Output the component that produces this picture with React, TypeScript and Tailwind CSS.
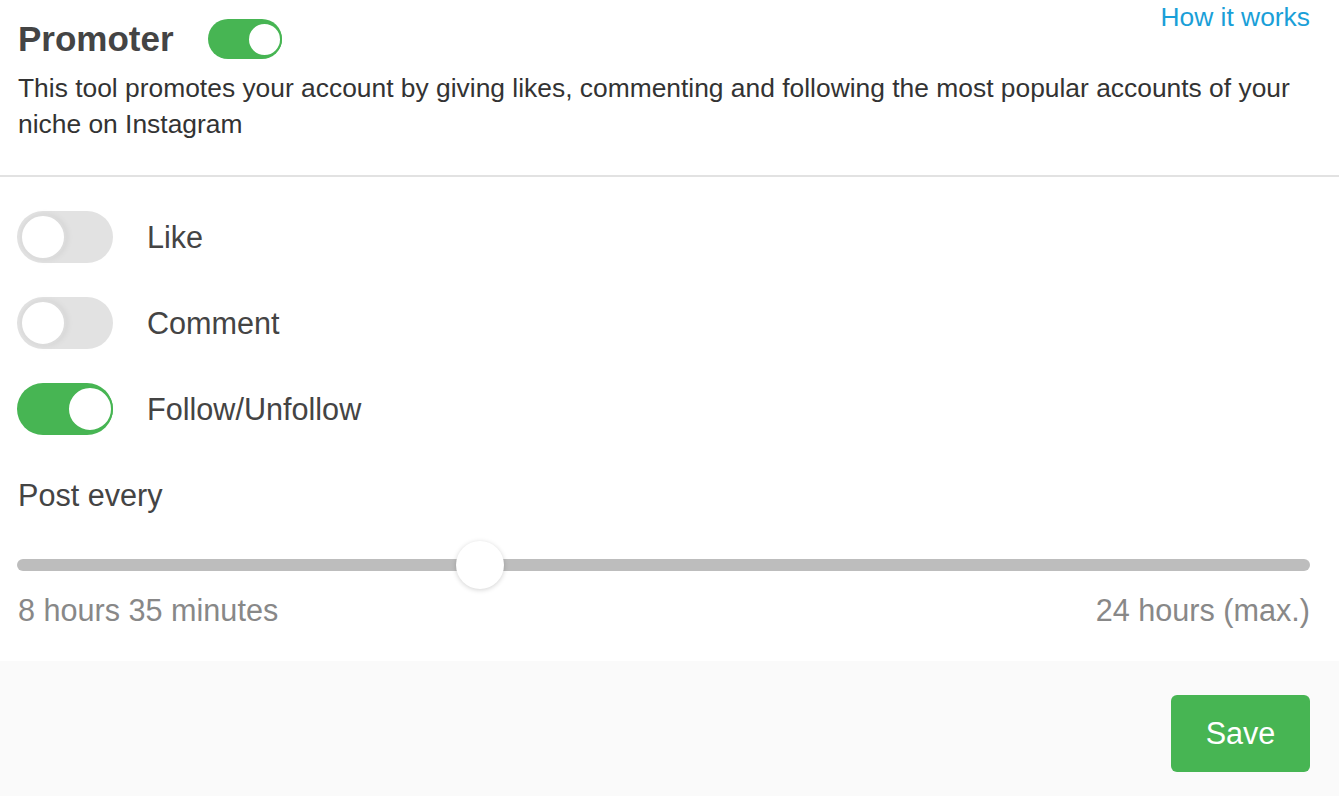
import { useState } from "react";

function Toggle({ on, size = "lg", onChange }: { on: boolean; size?: "sm" | "lg"; onChange: () => void }) {
  const track = size === "lg" ? "w-[96px] h-[52px]" : "w-[74px] h-[40px]";
  const knob = size === "lg" ? "w-[46px] h-[46px]" : "w-[35px] h-[35px]";
  const shift = on ? (size === "lg" ? "translate-x-[47px]" : "translate-x-[36px]") : "translate-x-0";
  return (
    <button
      onClick={onChange}
      className={`relative shrink-0 rounded-full p-[3px] flex items-center transition ${track} ${
        on ? "bg-[#47b553]" : "bg-[#e2e2e2]"
      }`}
    >
      <span
        className={`block rounded-full bg-white transition ${knob} ${shift} ${
          on ? "border-[2px] border-[#47b553]" : "border-[2px] border-[#dcdcdc] shadow-[2px_0_6px_rgba(0,0,0,0.06)]"
        }`}
      />
    </button>
  );
}

export default function App() {
  const [enabled, setEnabled] = useState(true);
  const [opts, setOpts] = useState({ like: false, comment: false, follow: true });
  const [value, setValue] = useState(35.8);

  const rows: { key: keyof typeof opts; label: string }[] = [
    { key: "like", label: "Like" },
    { key: "comment", label: "Comment" },
    { key: "follow", label: "Follow/Unfollow" },
  ];

  return (
    <div className="w-[1339px] min-h-[796px] bg-white font-['Liberation_Sans',Arial,sans-serif] flex flex-col">
      <div className="pl-[18px] pr-[29px]">
        <div className="flex items-start justify-between">
          <div className="flex items-center gap-[34px] pt-[19px]">
            <h1 className="text-[35px] leading-[40px] font-bold text-[#444]">Promoter</h1>
            <Toggle size="sm" on={enabled} onChange={() => setEnabled(!enabled)} />
          </div>
          <a href="#" className="text-[26.4px] leading-[32px] text-[#1a9fd8] mt-[1px]">
            How it works
          </a>
        </div>
        <p className="mt-[11px] pb-[33px] text-[26.4px] leading-[36px] text-[#333] pr-[10px]">
          This tool promotes your account by giving likes, commenting and following the most popular accounts of your
          niche on Instagram
        </p>
      </div>
      <div className="h-[2px] bg-[#e2e2e2]" />

      <div className="pl-[17px] pr-[29px] pt-[34px] pb-[33px]">
        <div className="flex flex-col gap-[34px]">
          {rows.map((r) => (
            <div key={r.key} className="flex items-center gap-[34px]">
              <Toggle on={opts[r.key]} onChange={() => setOpts({ ...opts, [r.key]: !opts[r.key] })} />
              <span className="text-[30.6px] leading-[36px] text-[#444]">{r.label}</span>
            </div>
          ))}
        </div>

        <div className="mt-[42px] pl-[1px] text-[30.6px] leading-[36px] text-[#444]">Post every</div>

        <div className="relative mt-[28px] h-[48px] flex items-center">
          <div className="w-full h-[12px] rounded-full bg-[#bdbdbd]" />
          <input
            type="range"
            min={0}
            max={100}
            step={0.1}
            value={value}
            onChange={(e) => setValue(Number(e.target.value))}
            className="absolute inset-0 w-full opacity-0 cursor-pointer"
          />
          <div
            className="absolute top-0 w-[48px] h-[48px] -ml-[24px] rounded-full bg-white shadow-[0_1px_5px_rgba(0,0,0,0.18)] pointer-events-none"
            style={{ left: `${value}%` }}
          />
        </div>

        <div className="mt-[3px] flex justify-between text-[30.6px] leading-[36px] text-[#888] pl-[1px]">
          <span>8 hours 35 minutes</span>
          <span>24 hours (max.)</span>
        </div>
      </div>

      <div className="flex-1 bg-[#fafafa] pr-[29px] pt-[34px] pb-[24px] flex justify-end items-start">
        <button className="w-[139px] h-[77px] rounded-[6px] bg-[#47b553] text-white text-[30.6px]">Save</button>
      </div>
    </div>
  );
}
